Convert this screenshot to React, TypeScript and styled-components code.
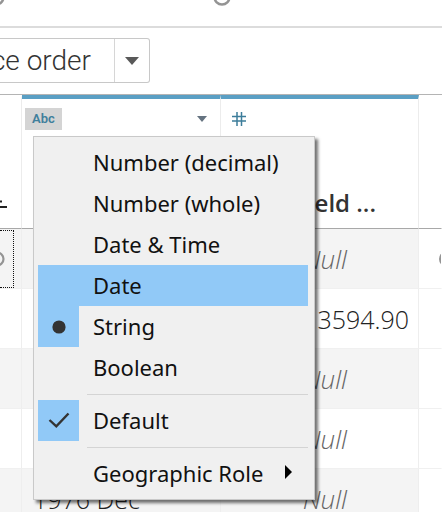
import React from "react";
import styled, { createGlobalStyle } from "styled-components";

const GlobalStyle = createGlobalStyle`
  * { box-sizing: border-box; }
  body {
    margin: 0;
    overflow: hidden;
    background: #fff;
    font-family: "Open Sans", "Noto Sans", sans-serif;
  }
  button { font: inherit; color: inherit; border: 0; padding: 0; background: none; }
`;

const Page = styled.main`
  height: 100vh;
  overflow: hidden;
`;

const JoinStrip = styled.div`
  height: 28px;
  border-bottom: 2px solid #dcdcdc;
  svg { display: block; }
`;

const Toolbar = styled.div`
  height: 66px;
  display: flex;
  align-items: flex-start;
  padding-top: 10px;
`;

const SortControl = styled.div`
  display: flex;
  height: 45px;
  border: 1px solid #c8c8c8;
  border-left: 0;
  border-radius: 0 3px 3px 0;
`;

const SortValue = styled.button`
  width: 114px;
  display: flex;
  justify-content: flex-end;
  padding-right: 23px;
  white-space: nowrap;
  font-family: Roboto, sans-serif;
  font-size: 28px;
  font-weight: 300;
  line-height: 43px;
  color: #333;
`;

const SortArrow = styled.button`
  width: 35px;
  display: flex;
  align-items: center;
  justify-content: center;
  border-left: 1px solid #d6d6d6;
`;

const Grid = styled.table`
  width: 100%;
  table-layout: fixed;
  border-collapse: separate;
  border-spacing: 0;
  border-top: 1px solid #b4b4b4;
`;

const Col = styled.col<{ $w?: number }>`
  width: ${(p) => (p.$w ? `${p.$w}px` : "auto")};
`;

const HeadCell = styled.th<{ $field?: boolean }>`
  position: relative;
  height: 134px;
  padding: 0;
  vertical-align: top;
  text-align: left;
  font-weight: 400;
  border-top: 4px solid ${(p) => (p.$field ? "#5a9fc4" : "#fff")};
  border-bottom: 1px solid #a8a8a8;
  border-right: 1px solid ${(p) => (p.$field === undefined ? "#fff" : "#ececec")};
`;

const TypeBar = styled.div`
  display: flex;
  align-items: center;
  justify-content: space-between;
  height: 40px;
  padding: 0 13px 0 3px;
`;

const TypeButton = styled.button`
  width: 37px;
  height: 22px;
  background: #d4d4d4;
  color: #3f7f9c;
  font-family: Roboto, sans-serif;
  font-size: 13px;
  font-weight: 600;
  line-height: 22px;
`;

const IconButton = styled.button`
  display: flex;
  padding: 0 8px;
`;

const PlainButton = styled.button`
  display: flex;
`;

const FieldName = styled.div`
  padding: 46px 42px 0 0;
  text-align: right;
  font-size: 24px;
  font-weight: 600;
  line-height: 36px;
  color: #333;
`;

const HeadMark = styled.svg`
  display: block;
  margin-top: 101px;
`;

const Row = styled.tr`
  &:nth-child(odd) td { background: #f4f4f4; }
  &:nth-child(odd) td:last-child { background: #fff; }
`;

const Cell = styled.td<{ $kind?: "null" | "number" | "date" | "focus" | "blank" }>`
  height: ${(p) => (p.$kind === "focus" ? "59px" : "60px")};
  padding: ${(p) =>
    p.$kind === "null" ? "0 71px 0 0" : p.$kind === "number" ? "0 9px 0 0" : p.$kind === "date" ? "0 0 0 11px" : "0"};
  text-align: ${(p) => (p.$kind === "null" || p.$kind === "number" ? "right" : "left")};
  font-style: ${(p) => (p.$kind === "null" ? "italic" : "normal")};
  color: ${(p) => (p.$kind === "null" ? "#666" : "#222")};
  font-size: ${(p) => (p.$kind === "null" ? "26px" : "25px")};
  font-weight: 300;
  line-height: 34px;
  white-space: nowrap;
  border-bottom: 1px solid #f0f0f0;
  border-right: 1px solid ${(p) => (p.$kind === "blank" ? "transparent" : "#eee")};
`;

const FocusBox = styled.div`
  width: 14px;
  height: 58px;
  display: flex;
  align-items: center;
  border: 1px dotted #111;
  border-left: 0;
`;

const EndMark = styled.svg`
  display: block;
  margin-left: auto;
`;

const Menu = styled.div`
  position: absolute;
  z-index: 2;
  top: 37px;
  left: 11px;
  width: 282px;
  padding: 5px 6px 5px 4px;
  background: #f0f0f0;
  border: 1px solid #c9c9c9;
  box-shadow: 3px 3px 3px rgba(0, 0, 0, 0.55);
`;

const MenuItem = styled.button<{ $active?: boolean }>`
  width: 100%;
  height: 41px;
  display: flex;
  align-items: center;
  text-align: left;
  font-family: "Noto Sans", sans-serif;
  font-size: 22px;
  line-height: 41px;
  white-space: nowrap;
  color: #111;
  background: ${(p) => (p.$active ? "#91c9f7" : "transparent")};
`;

const MarkBox = styled.span<{ $on?: boolean }>`
  width: 41px;
  height: 41px;
  margin-right: 14px;
  flex: none;
  display: flex;
  align-items: center;
  justify-content: center;
  background: ${(p) => (p.$on ? "#91c9f7" : "transparent")};
`;

const ItemLabel = styled.span`
  flex: 1;
`;

const SubArrow = styled.svg`
  position: relative;
  margin: 0 16px 4px 0;
`;

const Separator = styled.hr`
  height: 1px;
  margin: 6px 0 5px 49px;
  border: 0;
  background: #d4d4d4;
`;

type Item = { label: string; active?: boolean; mark?: "dot" | "check"; submenu?: boolean };

const groups: Item[][] = [
  [
    { label: "Number (decimal)" },
    { label: "Number (whole)" },
    { label: "Date & Time" },
    { label: "Date", active: true },
    { label: "String", mark: "dot" },
    { label: "Boolean" },
  ],
  [{ label: "Default", mark: "check" }],
  [{ label: "Geographic Role", submenu: true }],
];

const rows = [
  { date: "", value: null },
  { date: "", value: "3594.90" },
  { date: "", value: null },
  { date: "", value: null },
  { date: "1976 Dec", value: null },
];

function Mark({ mark }: { mark?: "dot" | "check" }) {
  return (
    <MarkBox $on={Boolean(mark)}>
      {mark === "dot" && (
        <svg width="14" height="14"><circle cx="7" cy="7" r="6.6" fill="#333" /></svg>
      )}
      {mark === "check" && (
        <svg width="22" height="18" fill="none" stroke="#333" strokeWidth="2.4">
          <path d="M1.5 8 8.3 14.4 20.5 1.5" />
        </svg>
      )}
    </MarkBox>
  );
}

function TypeMenu() {
  return (
    <Menu role="menu" aria-label="Data type">
      {groups.map((group, i) => (
        <React.Fragment key={i}>
          {i > 0 && <Separator />}
          {group.map((item) => (
            <MenuItem key={item.label} role="menuitem" $active={item.active}>
              <Mark mark={item.mark} />
              <ItemLabel>{item.label}</ItemLabel>
              {item.submenu && (
                <SubArrow width="7" height="14"><path d="M0 0 7 7 0 14Z" fill="#000" /></SubArrow>
              )}
            </MenuItem>
          ))}
        </React.Fragment>
      ))}
    </Menu>
  );
}

export default function App() {
  return (
    <Page>
      <GlobalStyle />
      <JoinStrip>
        <svg width="442" height="8" fill="none" stroke="#949494" strokeWidth="2.5">
          <circle cx="-4" cy="-3" r="7.5" />
          <circle cx="222" cy="-3" r="7.5" />
        </svg>
      </JoinStrip>
      <Toolbar>
        <SortControl>
          <SortValue>ce order</SortValue>
          <SortArrow aria-label="Choose sort order">
            <svg width="14" height="8"><path d="M0 0H14L7 8Z" fill="#595959" /></svg>
          </SortArrow>
        </SortControl>
      </Toolbar>
      <Grid>
        <colgroup>
          <Col $w={22} />
          <Col $w={199} />
          <Col $w={198} />
          <Col />
        </colgroup>
        <thead>
          <tr>
            <HeadCell $field={false}>
              <HeadMark width="8" height="9" stroke="#222" strokeWidth="2.2">
                <path d="M0 1.5H2M0 7H7" />
              </HeadMark>
            </HeadCell>
            <HeadCell $field>
              <TypeBar>
                <TypeButton>Abc</TypeButton>
                <PlainButton aria-label="Column options">
                  <svg width="10" height="6"><path d="M0 0H10L5 6Z" fill="#657380" /></svg>
                </PlainButton>
              </TypeBar>
              <TypeMenu />
            </HeadCell>
            <HeadCell $field>
              <TypeBar>
                <IconButton aria-label="Number type">
                  <svg width="14" height="14" stroke="#3d7d9b" strokeWidth="1.5">
                    <path d="M5 0V14M9.5 0V14M0 4.5H14M0 9H14" />
                  </svg>
                </IconButton>
              </TypeBar>
              <FieldName>Field ...</FieldName>
            </HeadCell>
            <HeadCell />
          </tr>
        </thead>
        <tbody>
          {rows.map((row, i) => (
            <Row key={i}>
              <Cell $kind={i === 0 ? "focus" : undefined}>
                {i === 0 && (
                  <FocusBox>
                    <svg width="5" height="16" fill="none" stroke="#949494" strokeWidth="2.2">
                      <circle cx="-3" cy="8" r="6.5" />
                    </svg>
                  </FocusBox>
                )}
              </Cell>
              <Cell $kind="date">{row.date}</Cell>
              <Cell $kind={row.value ? "number" : "null"}>{row.value ?? "Null"}</Cell>
              <Cell $kind="blank">
                {i === 0 && (
                  <EndMark width="2" height="16" fill="none" stroke="#949494" strokeWidth="2">
                    <circle cx="8" cy="8" r="7" />
                  </EndMark>
                )}
              </Cell>
            </Row>
          ))}
        </tbody>
      </Grid>
    </Page>
  );
}
